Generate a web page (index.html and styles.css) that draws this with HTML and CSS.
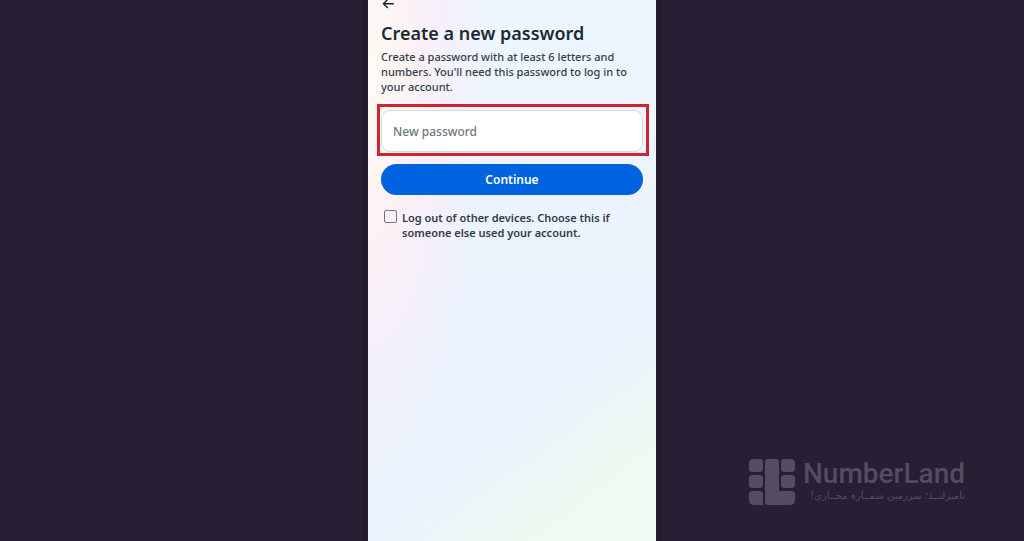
FILE: index.html
```html
<!DOCTYPE html>
<html lang="en">
<head>
<meta charset="utf-8">
<meta name="viewport" content="width=device-width, initial-scale=1">
<title>Create a new password</title>
<link rel="stylesheet" href="styles.css">
</head>
<body class="page">
<main class="panel">
  <button class="back" type="button" aria-label="Back">
    <svg class="back-icon" viewBox="0 0 14 9" aria-hidden="true"><path d="M12.8 3.7H2.6M6.9 -.8L2.4 3.7L6.9 8.1"/></svg>
  </button>
  <h1 class="title">Create a new password</h1>
  <p class="intro">Create a password with at least 6 letters and numbers. You'll need this password to log in to your account.</p>
  <form class="form">
    <div class="highlight">
      <input class="field" type="password" placeholder="New password" aria-label="New password">
    </div>
    <button class="submit" type="button">Continue</button>
    <label class="option">
      <input class="tick" type="checkbox">
      <span>Log out of other devices. Choose this if someone else used your account.</span>
    </label>
  </form>
</main>
<aside class="brand">
  <svg class="brand-mark" viewBox="0 0 48 48" aria-hidden="true">
    <path d="M6 1H12Q15 1 15 4V11Q15 14 12 14H4Q1 14 1 11V6Q1 1 6 1ZM4 17H12Q15 17 15 20V27Q15 30 12 30H4Q1 30 1 27V20Q1 17 4 17ZM4 33H12Q15 33 15 36V47H6Q1 47 1 42V36Q1 33 4 33ZM20 1H28Q31 1 31 4V33H44Q47 33 47 36V42Q47 47 42 47H20Q17 47 17 44V4Q17 1 20 1ZM36 1H42Q47 1 47 6V11Q47 14 44 14H36Q33 14 33 11V4Q33 1 36 1ZM36 17H44Q47 17 47 20V27Q47 30 44 30H36Q33 30 33 27V20Q33 17 36 17Z"/>
  </svg>
  <div class="brand-text">
    <span class="brand-name">NumberLand</span>
    <span class="brand-tagline" lang="fa" dir="rtl">نامبرلنــد؛ سرزمین شمــاره مجــازی!</span>
  </div>
</aside>
</body>
</html>
```
FILE: styles.css
```css
* { box-sizing: border-box; }

.page {
  margin: 0;
  min-height: 100vh;
  display: grid;
  grid-template-columns: 1fr min(288px, 100%) 1fr;
  background: #271f34;
  color: #1c2b33;
  font-family: "Noto Sans", sans-serif;
}

.panel {
  grid-column: 2;
  padding: 0 13px;
  background:
    linear-gradient(322deg, #effcf1 0%, #edfaf2 14%, #ebf8f600 30%),
    radial-gradient(ellipse 40% 76% at 0 14%, #fffaf3 0%, #fef8f4 16%, #fcf1f6 42%, #f4f0fb 68%, #edf4fe00 100%),
    linear-gradient(180deg, #eef6fe, #eaf2fd 60%, #eaf3fd);
  box-shadow: 0 0 0 6px #241b2f;
}

.back {
  display: block;
  padding: 0;
  border: 0;
  background: none;
  color: #1c2b33;
}

.back-icon {
  display: block;
  width: 14px;
  height: 9px;
  fill: none;
  stroke: currentColor;
  stroke-width: 1.4;
}

.title {
  margin: 12px 0 4px;
  font-size: 18px;
  line-height: 24px;
  font-weight: 600;
}

.intro {
  margin: 0 0 10px;
  font-size: 11px;
  line-height: 15px;
  font-weight: 500;
  color: #344049;
}

.highlight {
  margin: 0 -6px 8px -4px;
  padding: 3px 3px 1px 1px;
  border: 3px solid #d0252f;
}

.field {
  display: block;
  width: 100%;
  height: 42px;
  padding: 0 11px;
  border: 1px solid #d5dae0;
  border-radius: 9px;
  background: #fff;
  font: 500 12px "Noto Sans", sans-serif;
}

.field::placeholder { color: #6d7780; }

.submit {
  display: block;
  width: 100%;
  height: 31px;
  border: 0;
  border-radius: 16px;
  background: #0064e0;
  color: #fff;
  font: 600 12px "Noto Sans", sans-serif;
}

.option {
  display: flex;
  align-items: flex-start;
  gap: 5px;
  margin: 15px 0 0 3px;
  font-size: 11px;
  line-height: 15px;
  font-weight: 600;
  color: #303c48;
}

.tick {
  appearance: none;
  flex: none;
  width: 13px;
  height: 13px;
  margin: 0;
  border: 1px solid #6f7883;
  border-radius: 2px;
}

.brand {
  grid-column: 3;
  align-self: end;
  justify-self: end;
  display: flex;
  align-items: center;
  gap: 7px;
  padding: 0 59px 35px 0;
  color: #554c62;
}

.brand-mark {
  width: 48px;
  height: 48px;
  fill: currentColor;
}

.brand-text {
  display: flex;
  flex-direction: column;
}

.brand-name {
  font: 500 28px/28px Roboto, sans-serif;
}

.brand-tagline {
  font: 10px/16px "DejaVu Sans", sans-serif;
  white-space: nowrap;
}
```
